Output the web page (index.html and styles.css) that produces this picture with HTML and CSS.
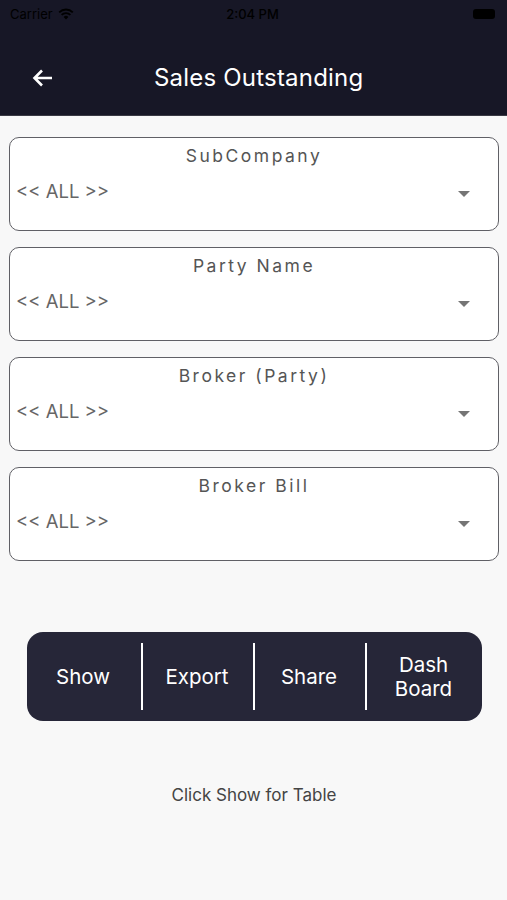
FILE: index.html
```html
<!DOCTYPE html>
<html lang="en">
<head>
    <meta charset="UTF-8">
    <meta name="viewport" content="width=device-width, initial-scale=1.0">
    <title>Sales Outstanding</title>
    <link rel="stylesheet" href="styles.css">
</head>
<body>
<header class="appbar">
    <div class="status">
        <div class="carrier">Carrier
            <svg class="wifi" width="16" height="12" viewBox="0 0 16 12">
                <path d="M8 11.5 L5.6 8.9 A3.4 3.4 0 0 1 10.4 8.9 Z" fill="#000"/>
                <path d="M3.6 6.9 A6.2 6.2 0 0 1 12.4 6.9" stroke="#000" stroke-width="1.8" fill="none"/>
                <path d="M1.2 4.3 A9.6 9.6 0 0 1 14.8 4.3" stroke="#000" stroke-width="1.8" fill="none"/>
            </svg>
        </div>
        <div class="clock">2:04 PM</div>
        <div class="battery"></div>
    </div>
    <div class="toolbar">
        <svg class="back" width="22" height="20" viewBox="0 0 22 20">
            <path d="M20 10 H3 M10 2.5 L2.5 10 L10 17.5" stroke="#fff" stroke-width="2.6" fill="none"/>
        </svg>
        <h1>Sales Outstanding</h1>
    </div>
</header>

<main>
    <section class="filters">
        <div class="field">
            <div class="label">SubCompany</div>
            <div class="select">
                <span>&lt;&lt; ALL &gt;&gt;</span>
                <span class="caret"></span>
            </div>
        </div>
        <div class="field">
            <div class="label">Party Name</div>
            <div class="select">
                <span>&lt;&lt; ALL &gt;&gt;</span>
                <span class="caret"></span>
            </div>
        </div>
        <div class="field">
            <div class="label">Broker (Party)</div>
            <div class="select">
                <span>&lt;&lt; ALL &gt;&gt;</span>
                <span class="caret"></span>
            </div>
        </div>
        <div class="field">
            <div class="label">Broker Bill</div>
            <div class="select">
                <span>&lt;&lt; ALL &gt;&gt;</span>
                <span class="caret"></span>
            </div>
        </div>
    </section>

    <nav class="actions">
        <button>Show</button>
        <button>Export</button>
        <button>Share</button>
        <button>Dash<br>Board</button>
    </nav>

    <p class="hint">Click Show for Table</p>
</main>
</body>
</html>
```

FILE: styles.css
```css
* {
    margin: 0; padding: 0; box-sizing: border-box;
}

body {
    font-family: Inter, "Noto Sans", sans-serif;
    background-color: #f8f8f8;
    width: 507px;
    height: 900px;
    overflow: hidden;
}

.appbar {
    background-color: #171726;
    height: 116px;
    border-bottom: 1px solid #3a3a44;
}

.status {
    height: 28px;
    display: flex;
    align-items: center;
    justify-content: space-between;
    padding: 0 12px 0 10px;
    font-size: 13px;
    color: #000;
}

.carrier {
    display: flex;
    align-items: center;
    gap: 5px;
    width: 120px;
}

.clock {
    font-weight: 500;
}

.battery {
    width: 22px;
    height: 10px;
    background: #000;
    border-radius: 3px;
    margin-left: 98px;
}

.toolbar {
    height: 87px;
    display: flex;
    align-items: center;
    padding: 12px 0 0 32px;
}

.toolbar h1 {
    font-size: 24px;
    font-weight: 400;
    color: #fff;
    margin-left: 100px;
    letter-spacing: 0.2px;
}

main {
    padding: 21px 8px 0 9px;
}

.filters {
    display: flex;
    flex-direction: column;
    gap: 16px;
}

.field {
    height: 94px;
    background: #fff;
    border: 1.5px solid #606066;
    border-radius: 10px;
    padding: 7px 28px 0 6px;
}

.label {
    text-align: center;
    font-size: 17.5px;
    letter-spacing: 2.5px;
    color: #555;
    padding-left: 22px;
}

.select {
    display: flex;
    align-items: center;
    justify-content: space-between;
    margin-top: 14px;
    font-size: 18.5px;
    color: #666;
}

.caret {
    width: 0;
    height: 0;
    border-left: 6px solid transparent;
    border-right: 6px solid transparent;
    border-top: 6px solid #757575;
    margin-top: 6px;
}

.actions {
    display: grid;
    grid-template-columns: 114px 112px 112px 1fr;
    margin: 71px 17px 0 18px;
    height: 89px;
    background: #262638;
    border-radius: 16px;
    padding: 11px 0;
}

.actions button {
    background: none;
    border: none;
    border-left: 2px solid #fff;
    color: #fff;
    font-family: inherit;
    font-size: 20.5px;
    line-height: 24px;
    padding-right: 2px;
}

.actions button:first-child {
    border-left: none;
}

.hint {
    text-align: center;
    font-size: 17px;
    color: #444;
    margin-top: 64px;
}
```
